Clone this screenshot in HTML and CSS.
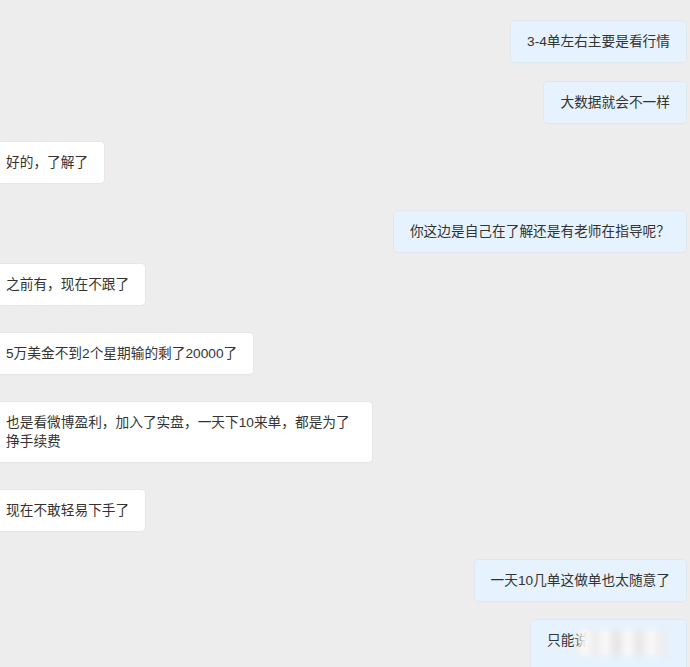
FILE: index.html
```html
<!DOCTYPE html>
<html lang="zh-CN">
<head>
<meta charset="utf-8">
<link rel="stylesheet" href="styles.css">
</head>
<body>
<div class="chat">
  <div class="msg me first"><div class="bubble">3-4单左右主要是看行情</div></div>
  <div class="msg me gap-l"><div class="bubble">大数据就会不一样</div></div>
  <div class="msg them gap-s"><div class="bubble">好的，了解了</div></div>
  <div class="msg me gap-m"><div class="bubble">你这边是自己在了解还是有老师在指导呢？</div></div>
  <div class="msg them gap-xs"><div class="bubble">之前有，现在不跟了</div></div>
  <div class="msg them gap-m"><div class="bubble">5万美金不到2个星期输的剩了20000了</div></div>
  <div class="msg them gap-m"><div class="bubble wide">也是看微博盈利，加入了实盘，一天下10来单，都是为了<br>挣手续费</div></div>
  <div class="msg them gap-m"><div class="bubble">现在不敢轻易下手了</div></div>
  <div class="msg me gap-mm"><div class="bubble">一天10几单这做单也太随意了</div></div>
  <div class="msg me gap-s"><div class="bubble last">只能说<span class="mark"></span></div></div>
</div>
</body>
</html>
```
FILE: styles.css
```css
html, body {
  margin: 0;
  padding: 0;
  background: #ededed;
  height: 100%;
  overflow: hidden;
}
.chat {
  display: flex;
  flex-direction: column;
  padding: 21px 4px 0 0;
  font-family: "Liberation Sans", "Noto Sans CJK SC", sans-serif;
  font-size: 13.7px;
  color: #333;
}
.msg {
  display: flex;
}
.msg.me {
  justify-content: flex-end;
}
.msg.them {
  justify-content: flex-start;
}
.gap-xs { margin-top: 12px; }
.gap-s { margin-top: 19px; }
.gap-l { margin-top: 20px; }
.gap-m { margin-top: 28px; }
.gap-mm { margin-top: 29px; }
.bubble {
  line-height: 19px;
  padding: 11px 16px;
  border-radius: 4px;
  white-space: nowrap;
  position: relative;
}
.me .bubble {
  background: #e6f2fd;
  box-shadow: 0 0 0 1px #dfe8ef, 0 1px 2px rgba(0,0,0,0.04);
}
.them .bubble {
  background: #ffffff;
  margin-left: -10px;
  box-shadow: 0 0 0 1px #e6e6e6, 0 1px 2px rgba(0,0,0,0.04);
}
.bubble.wide {
  width: 350px;
}
.bubble.last {
  width: 123px;
  height: 40px;
}
.mark {
  position: absolute;
  left: 46px;
  top: 10px;
  width: 94px;
  height: 26px;
  background:
    linear-gradient(90deg, rgba(250,245,225,0.3) 0, #fbfaf6 8%, #ececee 20%, #fafafa 30%, #e4e4e6 42%, #fbfbfb 54%, #e6e6e8 66%, #fafafa 78%, #ececee 90%, rgba(240,244,248,0.2) 100%);
  filter: blur(2.5px);
}
```
